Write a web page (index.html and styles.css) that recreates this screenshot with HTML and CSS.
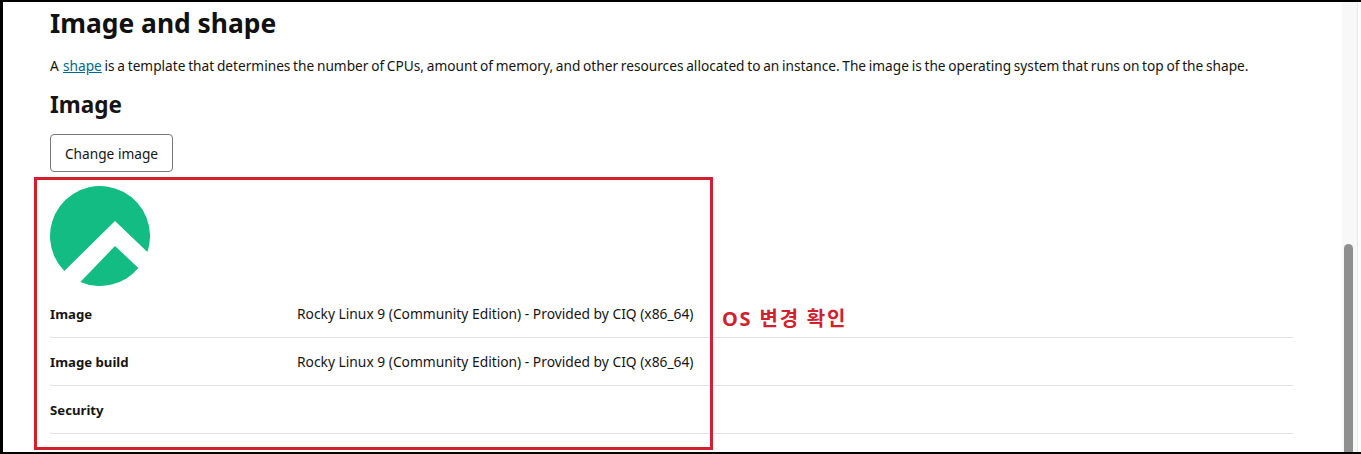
FILE: index.html
```html
<!DOCTYPE html>
<html lang="en">
<head>
  <meta charset="UTF-8">
  <title>Image and shape</title>
  <link rel="stylesheet" href="styles.css">
</head>
<body>
  <div class="frame">
    <main class="content">
      <h2>Image and shape</h2>
      <p class="intro">A <a href="#">shape</a> is a template that determines the number of CPUs, amount of memory, and other resources allocated to an instance. The image is the operating system that runs on top of the shape.</p>
      <h3>Image</h3>
      <button class="btn" type="button">Change image</button>
      <svg class="logo" viewBox="0 0 100 100" width="100" height="100">
        <path fill="#12bc82" d="M65 35 97.400 66A50 50 0 1 0 14.300 85Z"/>
        <path fill="#12bc82" d="M65 60 88.400 82A50 50 0 0 1 30.400 96Z"/>
      </svg>
      <dl class="details">
        <div class="row">
          <dt>Image</dt>
          <dd>Rocky Linux 9 (Community Edition) - Provided by CIQ (x86_64)</dd>
        </div>
        <div class="row">
          <dt>Image build</dt>
          <dd>Rocky Linux 9 (Community Edition) - Provided by CIQ (x86_64)</dd>
        </div>
        <div class="row">
          <dt>Security</dt>
          <dd></dd>
        </div>
      </dl>
    </main>
    <div class="scrollbar"><div class="thumb"></div></div>

    <!-- annotation drawn over the screenshot -->
    <div class="callout-box"></div>
    <div class="callout-text">OS 변경 확인</div>
  </div>
</body>
</html>
```

FILE: styles.css
```css
html, body {
  margin: 0;
  height: 100%;
  overflow: hidden;
  background: #000;
}
body {
  font-family: "Noto Sans", "Open Sans", sans-serif;
  color: #161513;
}
.frame {
  position: relative;
  display: flex;
  height: 450px;
  margin: 2px 0 2px 3px;
  background: #fff;
  overflow: hidden;
}
.content {
  flex: 1;
  padding: 0 49px 0 47px;
  min-width: 0;
}
h2 {
  margin: 3px 0 0;
  font-size: 26.4px;
  line-height: 36px;
  font-weight: 700;
  color: #111;
}
.intro {
  margin: 14px 0 0;
  font-size: 13.7px;
  line-height: 22px;
  word-spacing: -0.85px;
  white-space: nowrap;
}
.intro a {
  margin-left: 1.5px;
  color: #00688c;
}
h3 {
  margin: 12px 0 0;
  font-size: 22.5px;
  line-height: 32px;
  font-weight: 700;
}
.btn {
  display: block;
  margin-top: 13px;
  width: 123px;
  height: 38px;
  padding: 0;
  font-family: inherit;
  font-size: 13.7px;
  color: #161513;
  background: #fff;
  border: 1px solid #7a7874;
  border-radius: 4px;
}
.logo {
  display: block;
  margin-top: 14px;
}
.details {
  margin: 4px 0 0;
}
.row {
  display: flex;
  align-items: center;
  height: 47px;
  border-bottom: 1px solid #e4e2e0;
  font-size: 13.8px;
}
dt {
  width: 247px;
  font-size: 13.2px;
  font-weight: 700;
}
dd {
  margin: 0;
}
.scrollbar {
  flex: none;
  width: 15px;
  margin-right: 3px;
  background: #f8f8f8;
  border-right: 1px solid #e8e8e8;
}
.thumb {
  width: 9px;
  height: 240px;
  margin: 242px 0 0 2px;
  background: #8f8f8f;
  border-radius: 5px 5px 0 0;
}
.callout-box {
  position: absolute;
  left: 31px;
  top: 175px;
  width: 673px;
  height: 267px;
  border: 3px solid #d2202f;
}
.callout-text {
  position: absolute;
  left: 719px;
  top: 303px;
  font-family: "Noto Sans", "Noto Sans CJK KR", sans-serif;
  font-size: 20px;
  line-height: 28px;
  letter-spacing: 1.8px;
  font-weight: 700;
  color: #d2202f;
}
```
